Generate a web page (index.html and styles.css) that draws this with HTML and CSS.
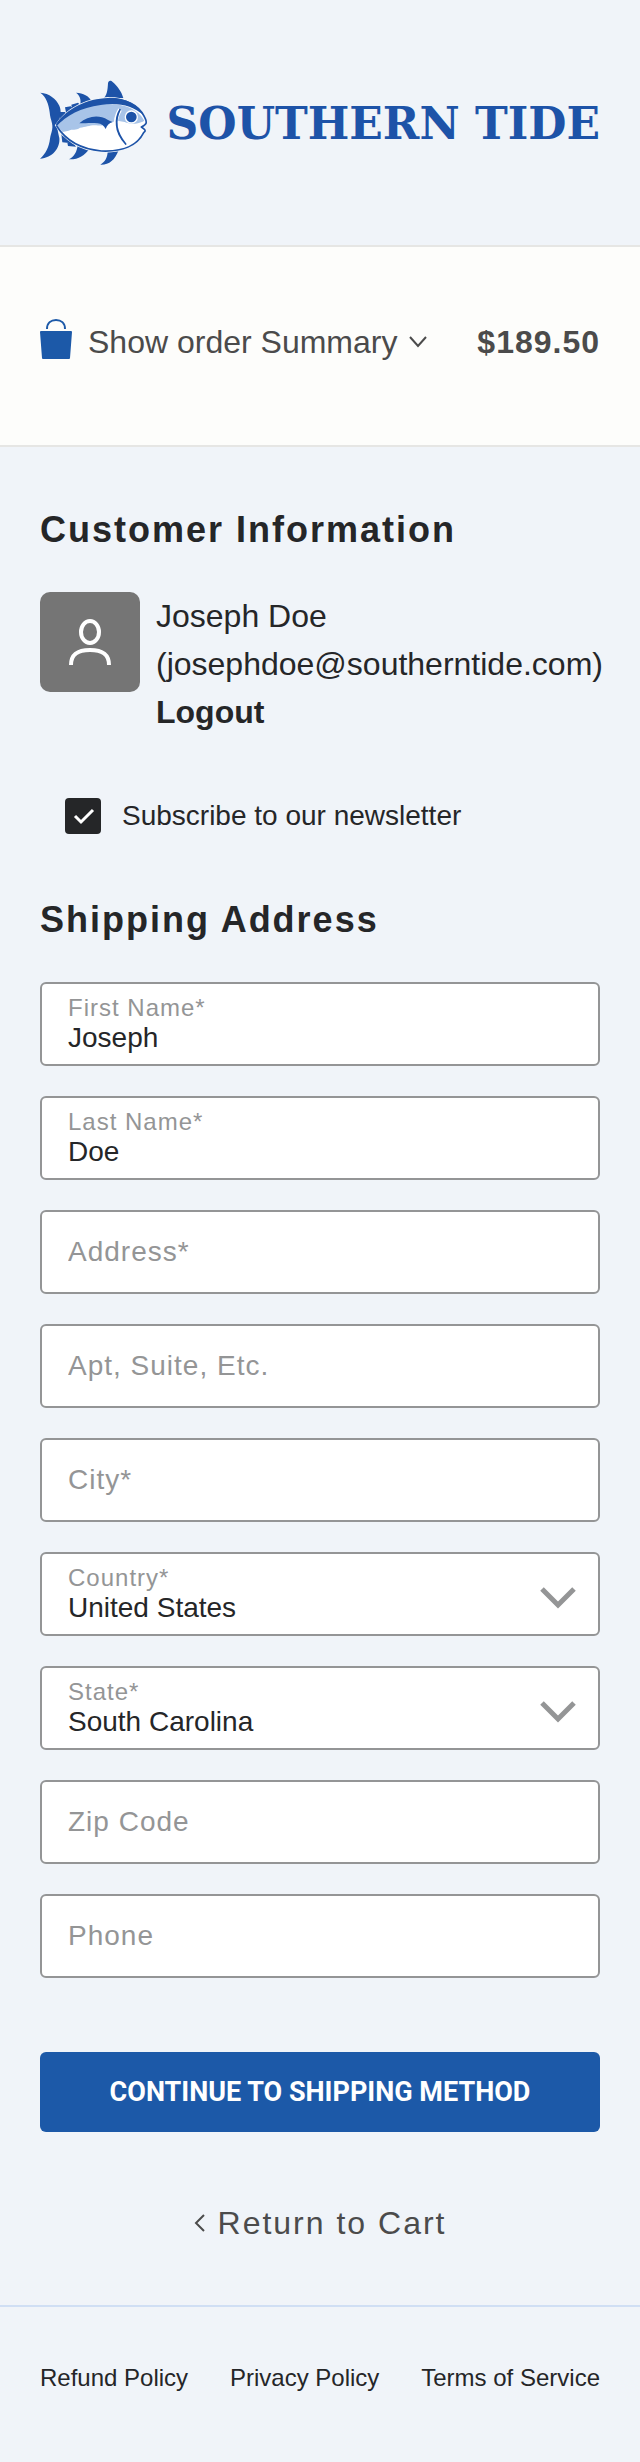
FILE: index.html
```html
<!DOCTYPE html>
<html lang="en">
<head>
<meta charset="utf-8">
<meta name="viewport" content="width=device-width, initial-scale=1">
<title>Southern Tide - Checkout</title>
<link rel="stylesheet" href="styles.css">
</head>
<body>
<header class="header">
  <a class="brand" href="#">
    <svg class="brand-fish" viewBox="30 28 324 255" aria-hidden="true">
      <g fill="#1d53a8">
        <path d="M31 66C58 68 78 84 88 105C95 121 92 137 84 154C79 170 85 186 88 202C91 232 68 262 30 264C48 248 57 228 60 204C63 186 70 176 66 158C63 145 60 139 59 125C56 100 49 80 31 66Z"/>
        <path d="M138 66C160 67 177 76 184 91L150 106C155 86 149 74 138 66Z"/>
        <path d="M218 86C231 76 233 57 234 38C235 28 243 28 248 34C262 46 274 61 280 82Z"/>
        <path d="M117 266C132 257 141 245 143 222L180 232C163 256 145 267 117 266Z"/>
        <path d="M211 282C225 273 232 261 233 243L265 241C254 268 238 283 211 282Z"/>
        <path d="M88 124L105 124L116 140L88 158ZM105 110L122 107L136 120L110 136ZM124 102L144 96L156 108L128 124ZM94 190L106 206L96 206ZM95 200L106 192L118 217L97 215ZM110 206L122 204L138 228L114 226Z"/>
      </g>
      <path d="M78 164C112 112 172 84 234 82C285 81 326 103 345 140C351 151 350 158 342 164C350 170 351 176 343 184C326 224 274 246 214 243C148 238 102 206 78 164Z" fill="#fff" stroke="#f0f4f9" stroke-width="6"/>
      <path d="M82 166C116 122 166 101 226 100C282 98 324 114 343 150L338 153C322 160 300 162 284 154L262 150C240 154 224 168 199 164C178 163 168 170 150 171C138 180 126 174 116 180L98 184Z" fill="#a8c4e8"/>
      <path d="M78 160C112 112 172 84 234 82C286 80 326 102 343 136C307 103 263 95 212 103C152 111 110 134 79 168Z" fill="#1d53a8"/>
      <path d="M80 166C106 207 150 235 214 241C276 244 322 225 341 186C348 181 348 178 334 169C350 161 353 157 343 138C327 103 286 84 236 84" fill="none" stroke="#1d53a8" stroke-width="5" stroke-linejoin="round"/>
      <path d="M148 158C168 140 193 134 216 140C229 143 237 152 248 154C237 157 231 164 227 175C222 165 214 159 203 158C184 155 168 158 148 158Z" fill="#1d53a8"/>
      <path d="M270 117C251 148 254 184 287 220" fill="none" stroke="#fff" stroke-width="12"/>
      <path d="M270 117C254 148 257 184 287 220C269 200 261 184 260 164C258 143 262 130 270 117Z" fill="#1d53a8" stroke="#1d53a8" stroke-width="5" stroke-linejoin="round"/>
      <circle cx="304" cy="139" r="18" fill="#1d53a8" stroke="#fff" stroke-width="4"/>
    </svg>
    <span class="brand-name">SOUTHERN TIDE</span>
  </a>
</header>

<section class="summary">
  <button class="summary-toggle" type="button">
    <svg class="icon-bag" viewBox="0 0 32 40" aria-hidden="true">
      <path d="M7 10C7 4 11 1 16 1S25 4 25 10" fill="none" stroke="#1c59a8" stroke-width="2"/>
      <path d="M1 12H31Q32 12 32 13L30 39Q30 40 29 40H3Q2 40 2 39L0 13Q0 12 1 12Z" fill="#1c59a8"/>
    </svg>
    <span class="summary-text">Show order Summary</span>
    <svg class="icon-down" viewBox="0 0 18 12" aria-hidden="true"><path d="M1 1L9 10L17 1" fill="none" stroke="#4b4b4b" stroke-width="2"/></svg>
  </button>
  <strong class="summary-price">$189.50</strong>
</section>

<main class="checkout">
  <h2 class="title">Customer Information</h2>
  <div class="account">
    <div class="avatar">
      <svg class="icon-user" viewBox="0 0 42 46" aria-hidden="true"><g fill="none" stroke="#fff" stroke-width="4"><ellipse cx="21" cy="13" rx="9" ry="11"/><path d="M2 46C2 35 9 31 21 31S40 35 40 46"/></g></svg>
    </div>
    <div class="account-text">
      <div>Joseph Doe</div>
      <div>(josephdoe@southerntide.com)</div>
      <a class="logout" href="#">Logout</a>
    </div>
  </div>

  <form class="form">
    <div class="newsletter">
      <span class="check">
        <input class="check-input" type="checkbox" id="newsletter" checked>
        <svg class="check-mark" viewBox="0 0 36 36" aria-hidden="true"><path d="M10 18L16 24L28 12" fill="none" stroke="#fff" stroke-width="3"/></svg>
      </span>
      <label for="newsletter">Subscribe to our newsletter</label>
    </div>

    <h2 class="title">Shipping Address</h2>
    <div class="fields">
      <div class="field"><label class="field-label" for="first">First Name*</label><input class="control" id="first" type="text" value="Joseph"></div>
      <div class="field"><label class="field-label" for="last">Last Name*</label><input class="control" id="last" type="text" value="Doe"></div>
      <div class="field"><input class="control" type="text" aria-label="Address" placeholder="Address*"></div>
      <div class="field"><input class="control" type="text" aria-label="Apt, Suite, Etc." placeholder="Apt, Suite, Etc."></div>
      <div class="field"><input class="control" type="text" aria-label="City" placeholder="City*"></div>
      <div class="field">
        <label class="field-label" for="country">Country*</label>
        <select class="control" id="country"><option>United States</option></select>
        <svg class="field-arrow" viewBox="0 0 36 22" aria-hidden="true"><path d="M2 2L18 18L34 2" fill="none" stroke="#949596" stroke-width="5"/></svg>
      </div>
      <div class="field">
        <label class="field-label" for="state">State*</label>
        <select class="control" id="state"><option>South Carolina</option></select>
        <svg class="field-arrow" viewBox="0 0 36 22" aria-hidden="true"><path d="M2 2L18 18L34 2" fill="none" stroke="#949596" stroke-width="5"/></svg>
      </div>
      <div class="field"><input class="control" type="text" aria-label="Zip Code" placeholder="Zip Code"></div>
      <div class="field"><input class="control" type="tel" aria-label="Phone" placeholder="Phone"></div>
    </div>
    <button class="submit" type="submit">CONTINUE TO SHIPPING METHOD</button>
  </form>

  <a class="return" href="#">
    <svg class="icon-back" viewBox="0 0 12 18" aria-hidden="true"><path d="M10 1L2 9L10 17" fill="none" stroke="#4b4b4b" stroke-width="2"/></svg>
    <span>Return to Cart</span>
  </a>
</main>

<footer class="footer">
  <a href="#">Refund Policy</a>
  <a href="#">Privacy Policy</a>
  <a href="#">Terms of Service</a>
</footer>
</body>
</html>
```
FILE: styles.css
```css
* { box-sizing: border-box; }
body {
  margin: 0;
  background: #f0f4f9;
  color: #252628;
  font-family: "Liberation Sans", Arial, sans-serif;
  font-size: 28px;
}
a { color: inherit; text-decoration: none; }
svg { display: block; flex: none; }
button, input, select { font: inherit; color: inherit; }

.header { padding: 80px 40px; }
.brand { display: flex; align-items: center; justify-content: space-between; color: #1d53a8; }
.brand-fish { width: 108px; height: 85px; }
.brand-name {
  padding-top: 3px;
  font-family: "DejaVu Serif", serif;
  font-size: 44px;
  font-weight: 700;
  line-height: 48px;
  white-space: nowrap;
}

.summary {
  display: flex;
  align-items: center;
  justify-content: space-between;
  padding: 66px 40px 81px;
  border: solid #e6e6e4;
  border-width: 2px 0;
  background: #fdfdfb;
  color: #4b4b4b;
  font-size: 32px;
  line-height: 43px;
}
.summary-toggle {
  display: flex;
  align-items: center;
  gap: 12px;
  padding: 0;
  border: 0;
  background: none;
  line-height: 43px;
}
.icon-bag { width: 32px; height: 40px; }
.summary-text { padding: 8px 0 0 4px; }
.icon-down { width: 18px; height: 12px; margin-top: 6px; }
.summary-price { padding-top: 8px; letter-spacing: 1px; }

.checkout { padding: 60px 40px 58px; }
.title {
  margin: 0 0 40px;
  font-size: 36px;
  line-height: 45px;
  letter-spacing: 2px;
}
.account { display: flex; gap: 16px; font-size: 32px; line-height: 48px; }
.avatar {
  display: flex;
  flex: none;
  align-items: center;
  justify-content: center;
  width: 100px;
  height: 100px;
  border-radius: 10px;
  background: #757575;
}
.icon-user { width: 42px; height: 46px; }
.logout { font-weight: 700; }

.newsletter {
  display: flex;
  align-items: center;
  gap: 21px;
  margin: 62px 0 63px;
  padding-left: 25px;
  line-height: 36px;
}
.check { position: relative; width: 36px; height: 36px; }
.check-input {
  appearance: none;
  display: block;
  width: 36px;
  height: 36px;
  margin: 0;
  border-radius: 4px;
  background: #252628;
}
.check-mark { position: absolute; inset: 0; pointer-events: none; }

.fields { display: flex; flex-direction: column; gap: 30px; }
.field {
  position: relative;
  display: flex;
  flex-direction: column;
  justify-content: center;
  min-height: 84px;
  padding: 10px 26px;
  border: 2px solid #949596;
  border-radius: 6px;
  background: #fff;
}
.field-label { color: #949596; font-size: 24px; line-height: 28px; letter-spacing: 1px; }
.control {
  appearance: none;
  width: 100%;
  height: 32px;
  padding: 0;
  border: 0;
  outline: 0;
  background: none;
  line-height: 32px;
}
.control::placeholder { color: #949596; opacity: 1; letter-spacing: 1px; }
.field-arrow {
  position: absolute;
  top: 33px;
  right: 22px;
  width: 36px;
  height: 22px;
  pointer-events: none;
}

.submit {
  display: block;
  width: 100%;
  margin-top: 74px;
  padding: 20px;
  border: 0;
  border-radius: 6px;
  background: #1c59a8;
  color: #fff;
  font-family: Roboto, "Liberation Sans", sans-serif;
  font-size: 27px;
  font-weight: 700;
  line-height: 40px;
}
.return {
  display: flex;
  align-items: center;
  justify-content: center;
  gap: 12px;
  margin-top: 67px;
  color: #4b4b4b;
  font-size: 32px;
  line-height: 48px;
  letter-spacing: 2px;
}
.icon-back { width: 12px; height: 18px; }

.footer {
  display: flex;
  justify-content: space-between;
  padding: 53px 40px 66px;
  border-top: 2px solid #d0dff4;
  font-size: 24px;
  line-height: 36px;
}
```
